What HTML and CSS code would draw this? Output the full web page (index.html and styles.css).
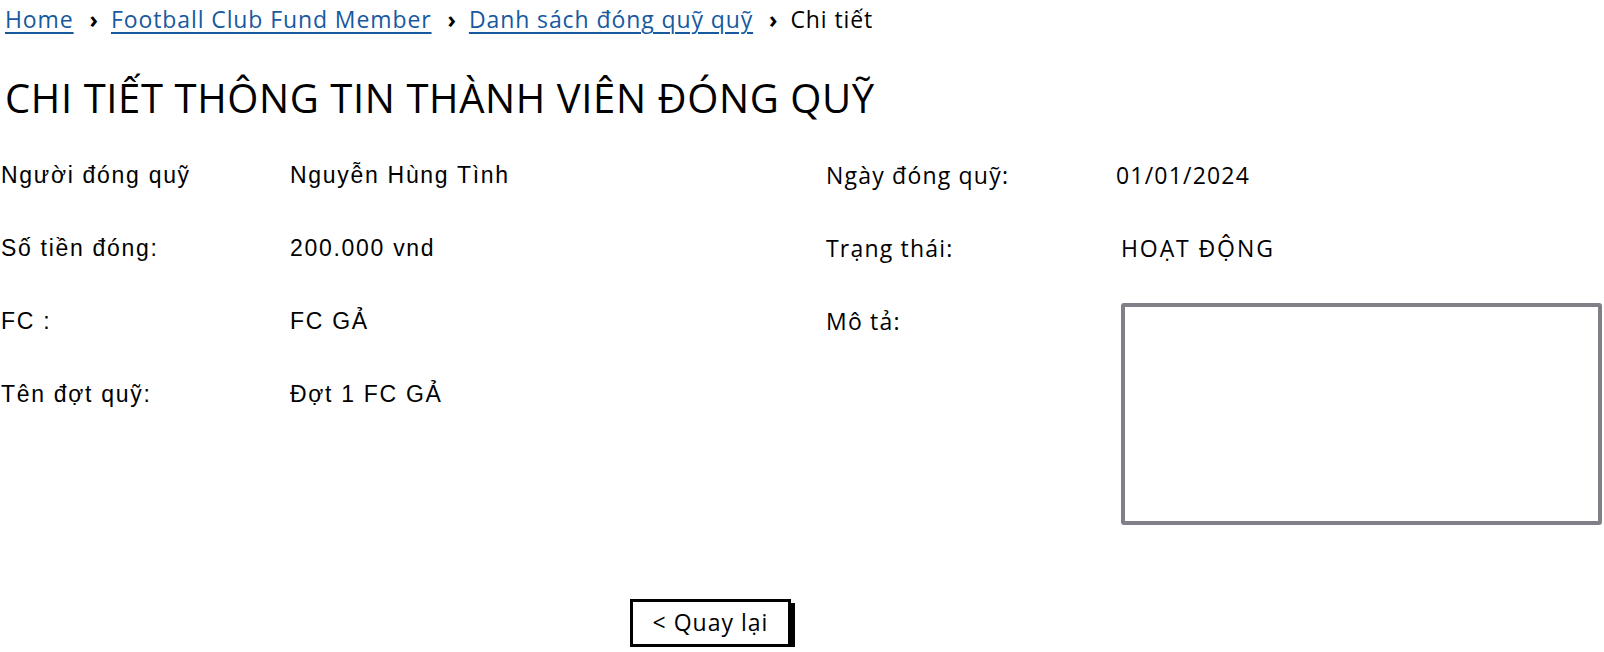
FILE: index.html
```html
<!DOCTYPE html>
<html lang="vi">
<head>
<meta charset="utf-8">
<title>Chi tiết thông tin thành viên đóng quỹ</title>
<link rel="stylesheet" href="styles.css">
</head>
<body>
<nav class="crumbs">
  <a class="crumb-link" href="#">Home</a><span class="sep">›</span><a class="crumb-link" href="#">Football Club Fund Member</a><span class="sep">›</span><a class="crumb-link" href="#">Danh sách đóng quỹ quỹ</a><span class="sep">›</span><span class="crumb-current">Chi tiết</span>
</nav>
<h1 class="title">CHI TIẾT THÔNG TIN THÀNH VIÊN ĐÓNG QUỸ</h1>
<section class="details">
  <div class="label">Người đóng quỹ</div>
  <div class="value">Nguyễn Hùng Tình</div>
  <div class="label-alt">Ngày đóng quỹ:</div>
  <div class="value-alt">01/01/2024</div>

  <div class="label">Số tiền đóng:</div>
  <div class="value">200.000 vnd</div>
  <div class="label-alt">Trạng thái:</div>
  <div class="value-alt status">HOẠT ĐỘNG</div>

  <div class="label">FC :</div>
  <div class="value">FC GẢ</div>
  <div class="label-alt">Mô tả:</div>
  <div class="desc-box"></div>

  <div class="label">Tên đợt quỹ:</div>
  <div class="value">Đợt 1 FC GẢ</div>
</section>
<div class="actions">
  <button class="back" type="button">&lt; Quay lại</button>
</div>
</body>
</html>
```
FILE: styles.css
```css
html, body {
  margin: 0;
  padding: 0;
  background: #ffffff;
}
body {
  color: #000;
  font-family: "Open Sans", "Liberation Sans", sans-serif;
  padding-top: 4px;
}
.crumbs {
  padding-left: 5px;
  font-size: 23px;
  line-height: 30px;
  letter-spacing: 0.9px;
  white-space: nowrap;
}
.crumb-link {
  color: #16599f;
  text-decoration: underline;
  text-decoration-thickness: 2px;
  text-underline-offset: 4px;
}
.sep {
  display: inline-block;
  margin: 0 12px 0 16px;
  font-weight: 700;
}
.crumb-current {
  color: #000;
}
.title {
  margin: 40px 0 0 5px;
  font-size: 40px;
  line-height: 48px;
  font-weight: 500;
  letter-spacing: 0.6px;
}
.details {
  margin-top: 40px;
  margin-left: 1px;
  display: grid;
  grid-template-columns: 289px 536px 290px 1fr;
  grid-template-rows: repeat(4, 73px);
  align-items: start;
}
.label, .value {
  font-family: "Liberation Sans", Arial, sans-serif;
  font-size: 23px;
  line-height: 26px;
  letter-spacing: 1.7px;
}
.label-alt, .value-alt {
  font-family: "Open Sans", "Liberation Sans", sans-serif;
  font-size: 23px;
  line-height: 26px;
  letter-spacing: 1.2px;
}
.status {
  padding-left: 5px;
  letter-spacing: 1.9px;
}
.desc-box {
  grid-column: 4;
  grid-row: 3 / span 2;
  margin: -5px 2px 0 5px;
  height: 222px;
  box-sizing: border-box;
  border: 4px solid #818089;
  border-radius: 3px;
}
.actions {
  margin-top: 145px;
  padding-left: 630px;
}
.back {
  font-family: "Open Sans", "Liberation Sans", sans-serif;
  font-size: 23px;
  line-height: 30px;
  letter-spacing: 1px;
  font-weight: 500;
  color: #000;
  background: #fff;
  border: 3px solid #000;
  box-shadow: 4px 4px 0 #000;
  padding: 5px 0 7px;
  width: 161px;
  text-align: center;
  cursor: pointer;
}
```
